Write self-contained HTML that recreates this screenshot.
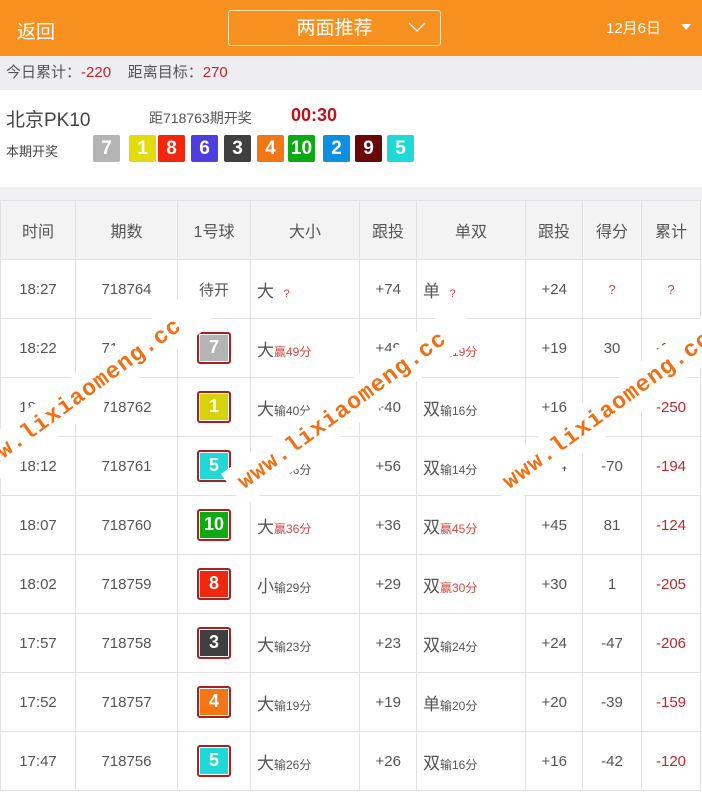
<!DOCTYPE html>
<html><head><meta charset="utf-8">
<style>
*{margin:0;padding:0;box-sizing:border-box}
body{width:702px;height:793px;overflow:hidden;background:#fff;font-family:"Liberation Sans","Noto Sans CJK SC",sans-serif;color:#555;position:relative}
.top{position:absolute;left:0;top:0;width:702px;height:56px;background:#f7901e;color:#fff}
.back{position:absolute;left:17px;top:17px;font-size:19px}
.sel{position:absolute;left:228px;top:10px;width:213px;height:36px;border:1px solid #fde6b0;border-radius:3px;text-align:center;font-size:19px;line-height:36px}
.sel svg{position:absolute;right:14px;top:11px}
.date{position:absolute;left:606px;top:17px;font-size:15px}
.tri{position:absolute;left:681px;top:24px;border-left:5px solid transparent;border-right:5px solid transparent;border-top:6px solid #fff}
.sum{position:absolute;left:0;top:56px;width:702px;height:34px;background:#eeeef2;font-size:15px;line-height:34px;padding-left:6px;color:#555}
.red{color:#c0272d}
.panel{position:absolute;left:0;top:90px;width:702px;height:97px;background:#fff}
.gap{position:absolute;left:0;top:187px;width:702px;height:13px;background:#f1f1f3}
.b{position:absolute;top:45px;width:27px;height:27px;color:#fff;font-weight:bold;font-size:19px;text-align:center;line-height:27px;border-radius:2px}
table{position:absolute;left:0;top:200px;border-collapse:collapse;table-layout:fixed;width:700px}
td{border:1px solid #e2e2e2;height:59px;text-align:center;font-size:15px;color:#555}
tr.h td{background:#f3f3f3;font-size:16px}
.l{text-align:left;padding-left:6px;font-size:17px}
.l small{font-size:12px}
.r{text-align:right;padding-right:15px}
.w{color:#d2473f}
.q{color:#d2473f;font-size:11px}
.ball{display:inline-block;width:34px;height:32px;border:2px solid #a8201f;border-radius:3px;color:#fff;font-weight:bold;font-size:18px;line-height:27px;box-shadow:inset 0 0 0 1px #fff}
.wm{position:absolute;background:#fff;color:#f26e12;font-weight:bold;font-size:23px;letter-spacing:1px;height:40px;line-height:40px;padding:0 10px;transform:rotate(-36deg);white-space:nowrap;font-family:"Liberation Mono",monospace}
</style></head><body>
<div class="top">
<div class="back">返回</div>
<div class="sel">两面推荐<svg width="18" height="11" viewBox="0 0 18 11"><path d="M1 1 L9 9 L17 1" stroke="#fff" fill="none" stroke-width="1.3"/></svg></div>
<div class="date">12月6日</div><div class="tri"></div>
</div>
<div class="sum">今日累计：<span class="red">-220</span>&nbsp;&nbsp;&nbsp; 距离目标：<span class="red">270</span></div>
<div class="panel">
<div style="position:absolute;left:6px;top:15px;font-size:19px;color:#444">北京PK10</div>
<div style="position:absolute;left:149px;top:18px;font-size:14px;color:#555">距718763期开奖</div>
<div style="position:absolute;left:291px;top:15px;font-size:18px;font-weight:bold;color:#c0101a">00:30</div>
<div style="position:absolute;left:6px;top:51px;font-size:13px;color:#444">本期开奖</div>
<span class="b" style="left:93px;background:#b4b4b4">7</span>
<span class="b" style="left:129px;background:#e2dc0b">1</span>
<span class="b" style="left:158px;background:#f0260e">8</span>
<span class="b" style="left:191px;background:#4d3ee0">6</span>
<span class="b" style="left:224px;background:#3f3f3f">3</span>
<span class="b" style="left:257px;background:#f27516">4</span>
<span class="b" style="left:288px;background:#0eaa14">10</span>
<span class="b" style="left:323px;background:#0e8fe0">2</span>
<span class="b" style="left:355px;background:#6a0707">9</span>
<span class="b" style="left:387px;background:#20d8d8">5</span>
</div>
<div class="gap"></div>
<table>
<colgroup><col style="width:75px"><col style="width:102px"><col style="width:73px"><col style="width:109px"><col style="width:57px"><col style="width:109px"><col style="width:57px"><col style="width:59px"><col style="width:59px"></colgroup>
<tr class="h"><td>时间</td><td>期数</td><td>1号球</td><td>大小</td><td>跟投</td><td>单双</td><td>跟投</td><td>得分</td><td>累计</td></tr>
<tr><td>18:27</td><td>718764</td><td>待开</td><td class="l">大 &nbsp;<span class="q">?</span></td><td class="r">+74</td><td class="l">单 &nbsp;<span class="q">?</span></td><td class="r">+24</td><td><span class="q" style="font-size:13px">?</span></td><td><span class="q" style="font-size:13px">?</span></td></tr>
<tr><td>18:22</td><td>718763</td><td><span class="ball" style="background:#b4b4b4">7</span></td><td class="l">大<small class="w">赢49分</small></td><td class="r">+49</td><td class="l">单<small class="w">赢19分</small></td><td class="r">+19</td><td>30</td><td class="red">-220</td></tr>
<tr><td>18:17</td><td>718762</td><td><span class="ball" style="background:#d8d20b">1</span></td><td class="l">大<small>输40分</small></td><td class="r">+40</td><td class="l">双<small>输16分</small></td><td class="r">+16</td><td>-56</td><td class="red">-250</td></tr>
<tr><td>18:12</td><td>718761</td><td><span class="ball" style="background:#20d8d8">5</span></td><td class="l">大<small>输56分</small></td><td class="r">+56</td><td class="l">双<small>输14分</small></td><td class="r">+14</td><td>-70</td><td class="red">-194</td></tr>
<tr><td>18:07</td><td>718760</td><td><span class="ball" style="background:#0eaa14">10</span></td><td class="l">大<small class="w">赢36分</small></td><td class="r">+36</td><td class="l">双<small class="w">赢45分</small></td><td class="r">+45</td><td>81</td><td class="red">-124</td></tr>
<tr><td>18:02</td><td>718759</td><td><span class="ball" style="background:#f0260e">8</span></td><td class="l">小<small>输29分</small></td><td class="r">+29</td><td class="l">双<small class="w">赢30分</small></td><td class="r">+30</td><td>1</td><td class="red">-205</td></tr>
<tr><td>17:57</td><td>718758</td><td><span class="ball" style="background:#3f3f3f">3</span></td><td class="l">大<small>输23分</small></td><td class="r">+23</td><td class="l">双<small>输24分</small></td><td class="r">+24</td><td>-47</td><td class="red">-206</td></tr>
<tr><td>17:52</td><td>718757</td><td><span class="ball" style="background:#f27516">4</span></td><td class="l">大<small>输19分</small></td><td class="r">+19</td><td class="l">单<small>输20分</small></td><td class="r">+20</td><td>-39</td><td class="red">-159</td></tr>
<tr><td>17:47</td><td>718756</td><td><span class="ball" style="background:#20d8d8">5</span></td><td class="l">大<small>输26分</small></td><td class="r">+26</td><td class="l">双<small>输16分</small></td><td class="r">+16</td><td>-42</td><td class="red">-120</td></tr>
</table>
<div class="wm" style="left:-60px;top:372px;width:290px">www.lixiaomeng.cc</div>
<div class="wm" style="left:205px;top:385px;width:290px">www.lixiaomeng.cc</div>
<div class="wm" style="left:470px;top:385px;width:290px">www.lixiaomeng.cc</div>
</body></html>
